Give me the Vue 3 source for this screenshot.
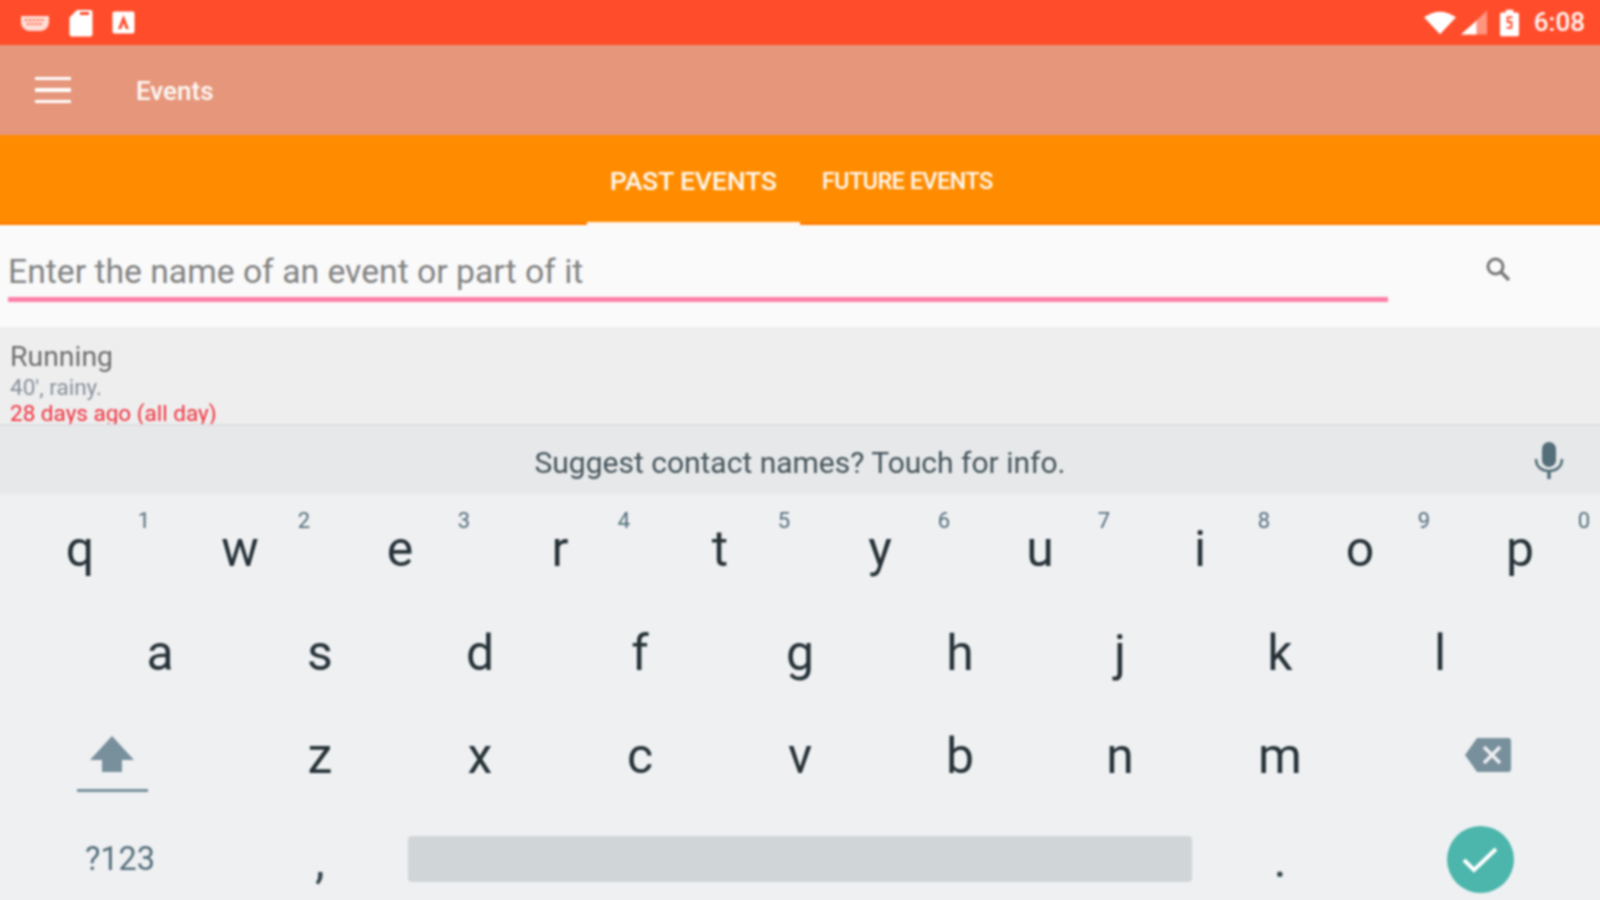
<script setup>
const row1 = [['q','1'],['w','2'],['e','3'],['r','4'],['t','5'],['y','6'],['u','7'],['i','8'],['o','9'],['p','0']]
const row2 = ['a','s','d','f','g','h','j','k','l']
const row3 = ['z','x','c','v','b','n','m']
</script>

<template>
  <div class="screen">
    <header class="status">
      <div class="status-left">
        <svg class="ic-kbd" width="30" height="20" viewBox="0 0 30 20"><path fill="#fff" opacity=".8" d="M1 3h28v6c0 5-4 9-9 9H10c-5 0-9-4-9-9z"/><path stroke="#ff4d2b" stroke-width="1.6" stroke-dasharray="2.5 1.5" fill="none" d="M5 7h20M7 11h16"/></svg>
        <svg width="24" height="28" viewBox="0 0 24 28"><path fill="#fff" d="M8 1h13a2.500 2.500 0 0 1 2.500 2.500v21.500a2.500 2.500 0 0 1-2.500 2.500H3A2.500 2.500 0 0 1 .5 25V8.500z"/><path fill="#ff4d2b" d="M11 3h9v3h-9z"/></svg>
        <svg width="23" height="23" viewBox="0 0 23 23"><rect x="0.500" y="0.500" width="22" height="22" rx="2" fill="#fff"/><path fill="#ff4d2b" d="M11.500 4 17 18h-3.200l-2.300-6-2.300 6H6z"/></svg>
      </div>
      <div class="status-right">
        <svg width="32" height="25" viewBox="0 0 34 25"><path fill="#fff" d="M0 7Q17-5 34 7L17 25z"/></svg>
        <svg width="26" height="25" viewBox="0 0 27 25"><path fill="#fff" opacity=".4" d="M27 0v25H0z"/><path fill="#fff" d="M16 11v14H0z"/></svg>
        <svg class="batt" width="19" height="28" viewBox="0 0 20 28"><path fill="#fff" d="M6 0h8v3h4a2 2 0 0 1 2 2v21a2 2 0 0 1-2 2H2a2 2 0 0 1-2-2V5a2 2 0 0 1 2-2h4z"/><path fill="none" stroke="#ff4d2b" stroke-width="2" d="M13 8H8v5h4v6H7"/></svg>
        <span class="time">6:08</span>
      </div>
    </header>

    <div class="toolbar">
      <div class="burger"><i></i><i></i><i></i></div>
      <span class="title">Events</span>
    </div>

    <nav class="tabs">
      <div class="tab active">PAST EVENTS</div>
      <div class="tab">FUTURE EVENTS</div>
    </nav>

    <section class="search">
      <div class="field">Enter the name of an event or part of it</div>
      <svg class="search-ic" width="28" height="28" viewBox="0 0 28 28"><circle cx="11.500" cy="11.500" r="7.500" fill="none" stroke="#777" stroke-width="3"/><path stroke="#777" stroke-width="3.400" d="m17 17 8 8"/></svg>
    </section>

    <section class="list">
      <div class="name">Running</div>
      <div class="note">40', rainy.</div>
      <div class="when">28 days ago (all day)</div>
    </section>

    <div class="strip">
      <span class="strip-text">Suggest contact names? Touch for info.</span>
      <svg class="mic" width="30" height="38" viewBox="0 0 30 38"><rect x="8" y="0" width="14" height="25" rx="7" fill="#546e7a"/><path d="M2 17c0 8 6 12 13 12s13-4 13-12" fill="none" stroke="#546e7a" stroke-width="2.600"/><path d="M15 28v9" stroke="#546e7a" stroke-width="3.500"/></svg>
    </div>

    <div class="keyboard">
      <div class="row">
        <div v-for="k in row1" :key="k[0]" class="key">{{ k[0] }}<sup class="hint">{{ k[1] }}</sup></div>
      </div>
      <div class="row row-offset">
        <div v-for="k in row2" :key="k" class="key">{{ k }}</div>
      </div>
      <div class="row">
        <div class="side shift">
          <svg width="46" height="36" viewBox="0 0 46 36"><path fill="#78909c" d="M23 0 45 24H33v12H13V24H1z"/></svg>
          <span class="shift-line"></span>
        </div>
        <div v-for="k in row3" :key="k" class="key">{{ k }}</div>
        <div class="side back">
          <svg width="46" height="34" viewBox="0 0 46 34"><path fill="#78909c" d="M12 0h31a3 3 0 0 1 3 3v28a3 3 0 0 1-3 3H12L0 17z"/><path stroke="#eef0f2" stroke-width="3.600" d="m19 9 16 16M35 9 19 25"/></svg>
        </div>
      </div>
      <div class="row bottom">
        <div class="side sym">?123</div>
        <div class="key punct">,</div>
        <div class="space-wrap"><div class="space"></div></div>
        <div class="key punct">.</div>
        <div class="side enter">
          <div class="done">
            <svg width="36" height="28" viewBox="0 0 36 28"><path d="M2 15 12 25 34 4" fill="none" stroke="#fff" stroke-width="4"/></svg>
          </div>
        </div>
      </div>
    </div>
  </div>
</template>

<style>
html, body { margin: 0; background: #eef0f2; overflow: hidden; }
</style>

<style scoped>
/* The screen bleeds 4px past the window so that the soft focus has no pale rim. */
.screen {
  width: 1608px;
  height: 908px;
  margin: -4px 0 0 -4px;
  overflow: hidden;
  display: flex;
  flex-direction: column;
  font-family: Roboto, "Liberation Sans", sans-serif;
  filter: blur(0.8px);
}
.screen > * { flex: none; }
.status {
  height: 49px;
  box-sizing: border-box;
  background: #ff4d2b;
  display: flex;
  align-items: center;
  justify-content: space-between;
  padding: 4px 19px 0 24px;
}
.status-left { display: flex; align-items: center; gap: 19px; }
.status-right { display: flex; align-items: center; gap: 5px; }
.status-right .batt { margin: 0 10px 0 8px; }
.time { color: #fff; font-size: 26px; font-weight: 500; line-height: 45px; opacity: .94; }

.toolbar {
  height: 90px;
  background: #e6967a;
  display: flex;
  align-items: center;
  padding-left: 39px;
}
.burger { width: 36px; display: flex; flex-direction: column; gap: 8px; }
.burger i { display: block; height: 3.500px; background: #fff; }
.title { margin-left: 65px; color: #fff; font-size: 26px; font-weight: 500; line-height: 32px; padding-top: 2px; opacity: .94; }

.tabs {
  height: 90px;
  background: #ff8c00;
  box-shadow: inset 0 -3px 0 #ff7d00;
  display: flex;
  padding-left: 591px;
}
.tab {
  color: #fff;
  opacity: .94;
  font-size: 23.200px;
  font-weight: 500;
  line-height: 92px;
  padding: 0 22px;
  letter-spacing: -0.4px;
  box-sizing: border-box;
}
.tab.active {
  width: 213px;
  font-size: 26.300px;
  letter-spacing: 0;
  padding: 0;
  text-align: center;
  border-bottom: 3px solid #fff;
  height: 90px;
}

.search {
  height: 102px;
  background: #fafafa;
  display: flex;
  padding: 21px 0 0 12px;
  box-sizing: border-box;
}
.field {
  width: 1380px;
  height: 56px;
  box-sizing: border-box;
  border-bottom: 5px solid #ff80a8;
  color: #828282;
  font-size: 33.700px;
  line-height: 51px;
}
.search-ic { margin: 9px 0 0 96px; }

.list {
  height: 97px;
  background: #eeeeee;
  padding: 13px 0 0 14px;
  box-sizing: border-box;
}
.name { color: #6e6e6e; font-size: 28.400px; line-height: 34px; }
.note { color: #87909c; font-size: 22.500px; line-height: 26px; }
.when { color: #f0303c; font-size: 22.500px; line-height: 26px; }

.strip {
  height: 70px;
  background: #e6e8e9;
  border-top: 2px solid #dcdfe1;
  box-sizing: border-box;
  display: flex;
  align-items: center;
  justify-content: center;
  color: #37474f;
  font-size: 30px;
  position: relative;
}
.strip-text { padding-top: 4px; opacity: .92; }
.mic { position: absolute; right: 40px; top: 16px; }

.keyboard { height: 410px; padding: 0 4px; background: #eef0f2; display: flex; flex-direction: column; }
.row { height: 103.500px; display: flex; flex: none; }
.row-offset { padding-left: 80px; }
.key {
  width: 160px;
  flex: none;
  position: relative;
  text-align: center;
  color: #263238;
  font-size: 50px;
  line-height: 110px;
}
.hint {
  position: absolute;
  top: 14px;
  right: 10px;
  font-size: 22px;
  line-height: 26px;
  color: #546e7a;
}
.side { width: 240px; flex: none; display: flex; flex-direction: column; align-items: center; justify-content: center; }
.shift { padding-right: 16px; box-sizing: border-box; padding-top: 22px; }
.shift-line { width: 71px; height: 3.500px; background: #78909c; margin-top: 17px; }
.back { padding-left: 16px; box-sizing: border-box; padding-top: 4px; }
.bottom { height: 95.500px; }
.sym { color: #546e7a; font-size: 32.500px; padding-top: 14px; box-sizing: border-box; }
.punct { color: #37474f; }
.space-wrap { flex: 1; display: flex; align-items: center; padding: 13px 8px 0; box-sizing: border-box; }
.space { width: 100%; height: 46px; background: #d0d5d7; border-radius: 4px; }
.done { width: 67px; height: 67px; border-radius: 50%; background: #4db6ac; display: flex; align-items: center; justify-content: center; }
.enter { padding-top: 14px; box-sizing: border-box; }
</style>
